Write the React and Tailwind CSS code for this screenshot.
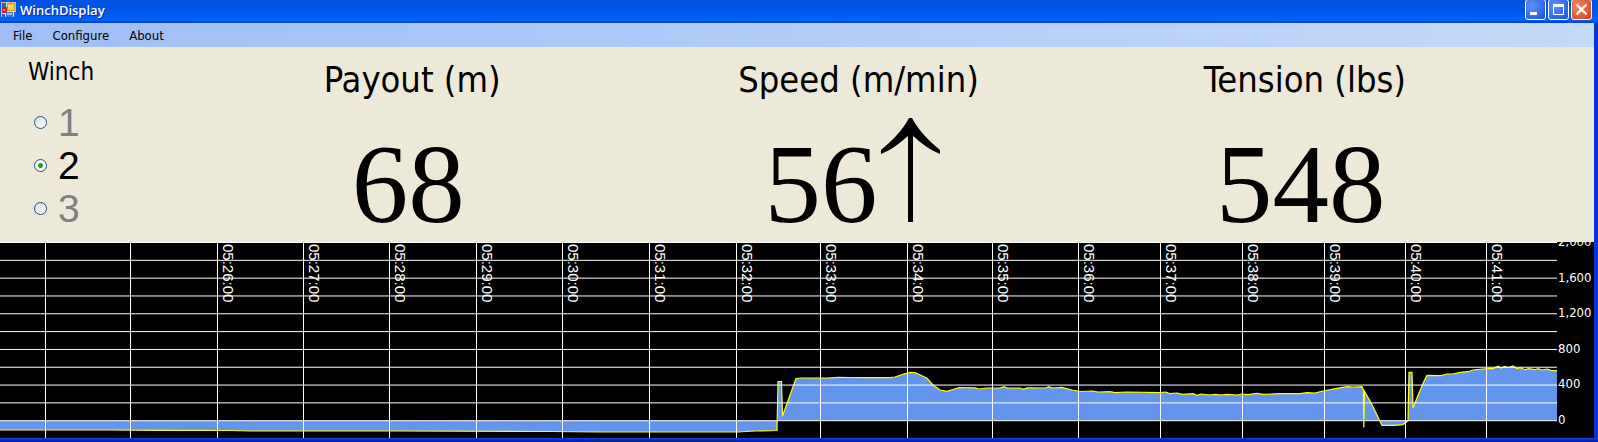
import { useState } from 'react';

const PLOT_WIDTH = 1557;
const PLOT_HEIGHT = 196;
const ZERO_Y = 178.7;

const gridRows = [0, 1, 2, 3, 4, 5, 6, 7, 8, 9, 10];

const gridColumns = [
  { x: 45 },
  { x: 130 },
  { x: 217, time: '05:26:00' },
  { x: 303, time: '05:27:00' },
  { x: 389, time: '05:28:00' },
  { x: 476, time: '05:29:00' },
  { x: 562, time: '05:30:00' },
  { x: 649, time: '05:31:00' },
  { x: 736, time: '05:32:00' },
  { x: 820, time: '05:33:00' },
  { x: 907, time: '05:34:00' },
  { x: 992, time: '05:35:00' },
  { x: 1078, time: '05:36:00' },
  { x: 1160, time: '05:37:00' },
  { x: 1242, time: '05:38:00' },
  { x: 1324, time: '05:39:00' },
  { x: 1405, time: '05:40:00' },
  { x: 1486, time: '05:41:00' },
];

const scaleLabels = ['2,000', '1,600', '1,200', '800', '400', '0'];

// Tension trace, in plot units
const trace = [
  [0, 188], [110, 188], [160, 188.4], [230, 188.5], [250, 189], [400, 189], [550, 189.5],
  [600, 190], [738, 190], [755, 189], [777, 188.5], [778, 139.5], [781.5, 139.5], [782.5, 174],
  [796, 136.5], [802, 136], [827, 136], [839, 135.3], [850, 135.5], [867, 135.7], [890, 135.7],
  [895, 135], [903, 132.3], [910, 130.3], [915, 130.7], [920, 132.7], [927, 136.3], [933, 143],
  [940, 148], [947, 149.3], [952, 147.7], [959, 145.5], [975, 145.8], [979, 147], [987, 146],
  [1000, 146], [1004, 144.7], [1007, 146], [1020, 146], [1024, 147.3], [1027, 145.8], [1045, 146],
  [1049, 144.7], [1052, 146], [1062, 145.3], [1072, 148], [1080, 149.5], [1093, 149], [1098, 150],
  [1110, 149.7], [1115, 150.7], [1127, 150], [1160, 150.7], [1166, 150], [1170, 151.7],
  [1177, 151], [1182, 152.3], [1193, 151.7], [1197, 153.3], [1201, 152], [1210, 153], [1215, 152.3],
  [1221, 153], [1227, 152.3], [1237, 153], [1242, 152], [1248, 152.7], [1257, 151.3], [1263, 152.3],
  [1280, 151.7], [1300, 151.7], [1307, 150.7], [1315, 151], [1323, 149], [1337, 146.3],
  [1347, 144.7], [1353, 145.2], [1362, 144.7], [1363.4, 148], [1363.8, 185.5], [1364.6, 149.5], [1371, 160.7],
  [1382, 183.3], [1395, 183.3], [1403, 182.7], [1408, 178.7], [1409, 130.3], [1412, 130.3],
  [1413, 165.7], [1423, 141.3], [1427, 133.3], [1441, 133.7], [1447, 132], [1453, 132],
  [1460, 130.3], [1468, 129.7], [1473, 128], [1487, 126.7], [1493, 126.7], [1498, 124.3],
  [1501, 126], [1505, 124.3], [1508, 125.7], [1513, 124], [1517, 126.7], [1520, 125.7],
  [1525, 127.7], [1529, 126.7], [1535, 127.7], [1538, 126.7], [1542, 128], [1547, 127],
  [1551, 128.3], [1557, 128.7],
];

const tracePoints = trace.map((point) => point.join(',')).join(' ');
const areaPoints = `0,${ZERO_Y} ${tracePoints} ${PLOT_WIDTH},${ZERO_Y}`;

const readings = [
  { label: 'Payout (m)', value: '68' },
  { label: 'Speed (m/min)', value: '56', rising: true },
  { label: 'Tension (lbs)', value: '548' },
];

function AppIcon() {
  return (
    <svg width="16" height="16" viewBox="0 0 16 16" aria-hidden="true">
      <rect x="0.5" y="0.5" width="14" height="14" fill="#e9e6d6" stroke="#c6c2b0" />
      <rect x="1" y="1" width="4" height="4" fill="#2f5fc4" />
      <rect x="1" y="5" width="5" height="6" fill="#c8281c" />
      <rect x="2" y="7" width="2" height="2" fill="#f08a78" />
      <rect x="6" y="1" width="8" height="8" fill="#d79a12" />
      <rect x="7" y="2" width="6" height="6" fill="#ffcf3a" />
      <rect x="8" y="3" width="3" height="2" fill="#fff0a0" />
      <rect x="1" y="12" width="3" height="3" fill="#2f5fc4" />
      <rect x="5" y="10" width="7" height="5" fill="#3f74d8" />
      <rect x="6" y="11" width="5" height="2" fill="#9dbcf2" />
      <rect x="13" y="10" width="2" height="5" fill="#2f5fc4" />
    </svg>
  );
}

function TitleBar() {
  const button =
    'flex size-[21px] items-center justify-center rounded-[3px] border border-white bg-radial-[at_30%_30%] from-[#5c92fb] to-[#1e50d8]';

  return (
    <header className="flex h-[23px] items-start justify-between bg-linear-to-b from-[#0051e0] via-[#0055e8] via-45% to-[#0068ff] pr-[6px] shadow-[inset_0_-2px_1px_#0046cc]">
      <div className="flex items-center gap-[3px] pt-[2px] pl-px">
        <AppIcon />
        <h1 className="font-['Open_Sans','Noto_Sans',sans-serif] text-[13px] leading-4 font-semibold text-white [text-shadow:1px_1px_0_#0a2f8c]">
          WinchDisplay
        </h1>
      </div>
      <div className="-mt-px flex gap-[2px]">
        <button type="button" aria-label="Minimize" className={button}>
          <svg width="13" height="13" viewBox="0 0 13 13" fill="#fff">
            <rect x="1" y="9" width="7" height="3" />
          </svg>
        </button>
        <button type="button" aria-label="Maximize" className={button}>
          <svg width="13" height="13" viewBox="0 0 13 13" fill="#fff">
            <path fillRule="evenodd" d="M1 1h11v11H1zM2 4v7h9V4z" />
          </svg>
        </button>
        <button
          type="button"
          aria-label="Close"
          className="flex size-[21px] items-center justify-center rounded-[3px] border border-white bg-radial-[at_30%_30%] from-[#f08a68] to-[#d03c14]"
        >
          <svg width="13" height="13" viewBox="0 0 13 13" stroke="#fff" strokeWidth="2.4">
            <path d="M1.5 1.5l10 10M11.5 1.5l-10 10" />
          </svg>
        </button>
      </div>
    </header>
  );
}

function MenuBar() {
  return (
    <nav className="flex h-6 items-center gap-5 bg-linear-to-r from-[#9ebef5] to-[#c4dafa] pt-px pl-[13px] text-[13px] leading-4">
      <button type="button">File</button>
      <button type="button">Configure</button>
      <button type="button">About</button>
    </nav>
  );
}

function WinchPicker() {
  const [winch, setWinch] = useState('2');

  return (
    <fieldset className="w-[189px] shrink-0 pt-2 pl-7">
      <legend className="float-left w-full text-[24px] leading-[34px]">Winch</legend>
      <div className="clear-both flex flex-col pt-3 pl-[6px]">
        {['1', '2', '3'].map((id) => (
          <label
            key={id}
            className="flex h-[43px] items-center gap-[11px] font-['Liberation_Sans',sans-serif] text-[39px] leading-none text-[#808080] has-checked:text-black"
          >
            <input
              type="radio"
              name="winch"
              value={id}
              checked={winch === id}
              onChange={() => setWinch(id)}
              className="size-[13px] appearance-none rounded-full border border-[#1d5281] bg-[linear-gradient(135deg,#dcdcd7,#fff)] checked:bg-[radial-gradient(circle,#21a121_2px,#fff_3px)]"
            />
            {id}
          </label>
        ))}
      </div>
    </fieldset>
  );
}

function RisingArrow() {
  return (
    <svg
      className="mx-1 mb-[2px]"
      width="59"
      height="104"
      viewBox="0 0 59 104"
      role="img"
      aria-label="rising"
    >
      <path d="M28 0h3C38 13 48 23 59 32v4C49 32 40 25 32 18v86h-5V18C19 25 10 32 0 36v-4C11 23 21 13 28 0z" />
    </svg>
  );
}

function Reading({ label, value, rising }) {
  return (
    <section className="flex flex-1 flex-col items-center pt-2">
      <h2 className="text-[36px] leading-[50px] whitespace-nowrap">{label}</h2>
      <p className="mr-2 flex h-[119px] items-end font-['Liberation_Serif',serif] text-[113px] leading-[80px] whitespace-nowrap">
        {value}
        {rising && <RisingArrow />}
      </p>
    </section>
  );
}

function TensionChart() {
  return (
    <div className="flex h-[196px] overflow-hidden bg-black text-white">
      <div className="relative min-w-0 flex-1">
        <svg
          className="block h-full w-full"
          viewBox={`0 0 ${PLOT_WIDTH} ${PLOT_HEIGHT}`}
          preserveAspectRatio="none"
          role="img"
          aria-label="Tension"
        >
          <polygon points={areaPoints} fill="#6495ed" />
          <polyline points={tracePoints} fill="none" stroke="#ff0" strokeWidth="1.2" />
          {gridRows.map((row) => (
            <rect key={row} x="0" y={row * 17.82} width={PLOT_WIDTH} height="1" fill="#fff" />
          ))}
          {gridColumns.map(({ x }) => (
            <rect key={x} x={x} y="0" width="1" height={PLOT_HEIGHT} fill="#fff" />
          ))}
        </svg>
        {gridColumns
          .filter(({ time }) => time)
          .map(({ x, time }) => (
            <span
              key={time}
              className="absolute top-[2px] pl-[3px] font-['Liberation_Sans',sans-serif] text-[15px] leading-4 [writing-mode:vertical-rl]"
              style={{ left: `${(x / PLOT_WIDTH) * 100}%` }}
            >
              {time}
            </span>
          ))}
      </div>
      <div className="-mt-[9px] flex h-[196px] w-[37px] flex-col justify-between pl-px text-[13px] leading-[18px]">
        {scaleLabels.map((label) => (
          <span key={label}>{label}</span>
        ))}
      </div>
    </div>
  );
}

export default function App() {
  return (
    <div className="bg-[#ece9d8] font-['DejaVu_Sans_Condensed','Noto_Sans',sans-serif] text-black">
      <TitleBar />
      <div className="border-r-4 border-[#0036d6]">
        <MenuBar />
        <main>
          <div className="flex h-[195px] pr-[66px]">
            <WinchPicker />
            {readings.map((reading) => (
              <Reading key={reading.label} {...reading} />
            ))}
          </div>
          <TensionChart />
        </main>
      </div>
      <div className="h-1 bg-linear-to-b from-[#0048f0] to-[#00138c]" />
    </div>
  );
}
